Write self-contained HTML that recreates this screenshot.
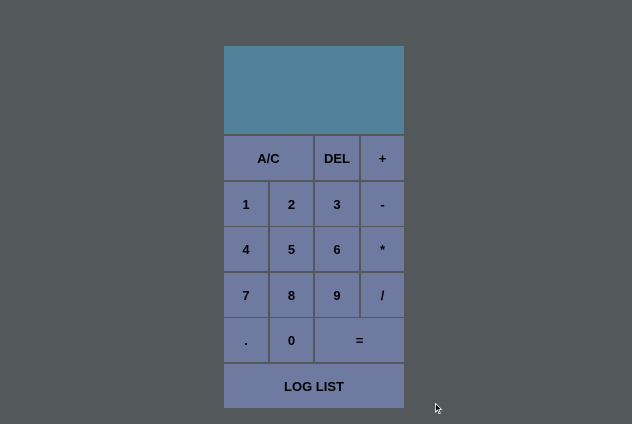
<!DOCTYPE html>
<html><head><style>
html,body{margin:0;padding:0;width:632px;height:424px;background:#53585b;overflow:hidden}
div{position:absolute;box-sizing:border-box}
.d{left:224px;top:46px;width:180px;height:88px;background:#52819c}
.b{background:#6f7aa1;color:#000;font:bold 13px "Liberation Sans",sans-serif;display:flex;align-items:center;justify-content:center;height:44px}
</style></head><body>
<div class="d"></div>
<div class="b" style="left:224px;top:136px;width:89px">A/C</div>
<div class="b" style="left:315px;top:136px;width:44px">DEL</div>
<div class="b" style="left:361px;top:136px;width:43px">+</div>
<div class="b" style="left:224px;top:182px;width:44px">1</div>
<div class="b" style="left:270px;top:182px;width:43px">2</div>
<div class="b" style="left:315px;top:182px;width:44px">3</div>
<div class="b" style="left:361px;top:182px;width:43px">-</div>
<div class="b" style="left:224px;top:227px;width:44px">4</div>
<div class="b" style="left:270px;top:227px;width:43px">5</div>
<div class="b" style="left:315px;top:227px;width:44px">6</div>
<div class="b" style="left:361px;top:227px;width:43px">*</div>
<div class="b" style="left:224px;top:273px;width:44px">7</div>
<div class="b" style="left:270px;top:273px;width:43px">8</div>
<div class="b" style="left:315px;top:273px;width:44px">9</div>
<div class="b" style="left:361px;top:273px;width:43px">/</div>
<div class="b" style="left:224px;top:318px;width:44px">.</div>
<div class="b" style="left:270px;top:318px;width:43px">0</div>
<div class="b" style="left:315px;top:318px;width:89px">=</div>
<div class="b" style="left:224px;top:364px;width:180px">LOG LIST</div>
<svg style="position:absolute;left:435px;top:403px" width="8" height="12" viewBox="0 0 8 12"><path d="M0.5 0.5 L0.5 9 L2.5 7 L4 10.5 L5.3 10 L3.8 6.7 L6.5 6.5 Z" fill="#000" stroke="#fff" stroke-width="0.8"/></svg>
</body></html>
